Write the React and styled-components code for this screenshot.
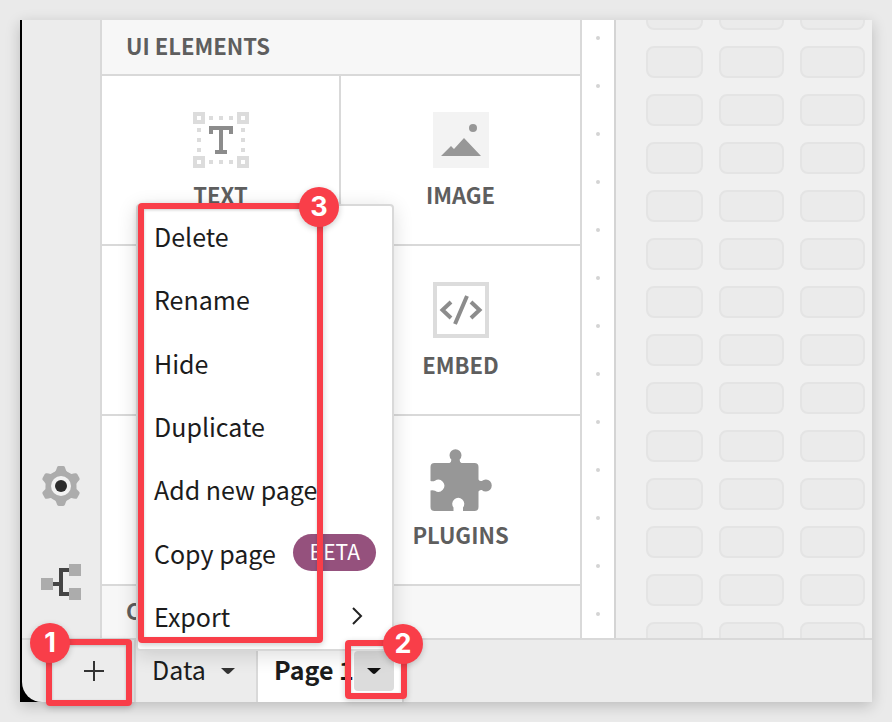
import React from "react";
import styled, { createGlobalStyle, css } from "styled-components";

const line = "#d9d9d9";
const red = "#f93e49";

const GlobalStyle = createGlobalStyle`
  *, *::before, *::after { box-sizing: border-box; }
  body {
    margin: 0;
    background: #eaeaea;
    color: #1c1c1c;
    font-family: "Noto Sans CJK SC", "Noto Sans", sans-serif;
  }
  button {
    margin: 0;
    padding: 0;
    border: 0;
    background: none;
    color: inherit;
    font: inherit;
    cursor: pointer;
  }
  svg { display: block; flex: none; }
`;

const Page = styled.div`
  display: flex;
  min-height: 100vh;
  padding: 20px;
`;

const Window = styled.div`
  position: relative;
  display: flex;
  flex: 1;
  flex-direction: column;
  min-width: 0;
  padding-left: 2px;
  background: #000;
  box-shadow: 0 4px 14px rgba(0, 0, 0, 0.2);
`;

const Workspace = styled.main`
  display: flex;
  flex: 1;
`;

const Rail = styled.nav`
  display: flex;
  flex: none;
  flex-direction: column;
  justify-content: flex-end;
  align-items: center;
  gap: 56px;
  width: 80px;
  padding-bottom: 36px;
  background: #ececec;
  border-right: 2px solid ${line};
`;

const RailButton = styled.button`
  display: grid;
  place-items: center;
  width: 40px;
  height: 40px;
`;

const Panel = styled.aside`
  display: flex;
  flex: none;
  flex-direction: column;
  width: 480px;
  background: #fff;
  border-right: 2px solid ${line};
`;

const PanelHeading = styled.h2`
  display: flex;
  align-items: center;
  flex: ${(p) => (p.$last ? "1" : "none")};
  min-height: ${(p) => (p.$last ? "52px" : "56px")};
  margin: 0;
  padding: 0 24px 4px;
  background: #f7f7f7;
  border-bottom: ${(p) => (p.$last ? "0" : `2px solid ${line}`)};
  color: #5e5e5e;
  font-size: 22px;
  font-weight: 700;
  line-height: 24px;
`;

const TileGrid = styled.div`
  display: grid;
  grid-template-columns: 1fr 1fr;
`;

const Tile = styled.button`
  display: flex;
  flex-direction: column;
  align-items: center;
  gap: 14px;
  height: 170px;
  padding-top: 36px;
  border-bottom: 2px solid ${line};
  color: #5e5e5e;
  font-size: 22px;
  font-weight: 700;
  line-height: 24px;

  &:nth-child(odd) { border-right: 2px solid ${line}; }
`;

const TileIcon = styled.span`
  display: flex;
  align-items: center;
  justify-content: center;
  width: 56px;
  height: 56px;
`;

const Gutter = styled.div`
  display: flex;
  flex: none;
  flex-direction: column;
  align-items: center;
  gap: 44px;
  width: 34px;
  padding-top: 16px;
  background: #fff;
  border-right: 2px solid #d4d4d4;
`;

const Dot = styled.span`
  width: 4px;
  height: 4px;
  border-radius: 50%;
  background: #d4d4d4;
`;

const Canvas = styled.section`
  flex: 1;
  min-width: 0;
  overflow: hidden;
  padding: 0 7px 0 30px;
  background: #f0f0f0;
`;

const CellGrid = styled.div`
  display: grid;
  grid-template-columns: 57px 1fr 1fr;
  grid-auto-rows: 32px;
  gap: 16px;
  margin: -22px 0 -16px;
`;

const Cell = styled.div`
  background: #ebebeb;
  border: 2px solid #e4e4e4;
  border-radius: 8px;
`;

const PageBar = styled.footer`
  display: flex;
  flex: none;
  height: 64px;
  padding-left: 32px;
  background: #ececec;
  border-top: 2px solid ${line};
  border-bottom-left-radius: 20px;
`;

const AddPage = styled.button`
  display: grid;
  place-items: center;
  width: 82px;
  border-right: 2px solid ${line};
`;

const Tab = styled.div`
  display: flex;
  align-items: center;
  padding: 0 8px 0 16px;
  border-right: 2px solid ${line};
  ${(p) =>
    p.$active
      ? css`
          width: 146px;
          background: #fff;
          font-weight: 700;
        `
      : css`
          width: 122px;
        `}
`;

const TabName = styled.button`
  flex: 1;
  min-width: 0;
  padding-bottom: 4px;
  font-size: 25px;
  line-height: 36px;
  text-align: left;
  white-space: nowrap;
`;

const TabCaret = styled.button`
  display: grid;
  flex: none;
  place-items: center;
  width: 40px;
  height: 40px;
  border-radius: 4px;
  background: ${(p) => (p.$open ? "#dcdcdc" : "none")};
`;

const Menu = styled.div`
  position: absolute;
  left: 116px;
  bottom: 51px;
  display: grid;
  grid-auto-rows: 1fr;
  width: 258px;
  height: 447px;
  background: #fff;
  border: 2px solid ${line};
  border-radius: 4px;
  box-shadow: 0 4px 20px rgba(0, 0, 0, 0.14);
`;

const MenuItem = styled.button`
  display: flex;
  align-items: center;
  justify-content: space-between;
  padding: 0 16px 3px;
  font-size: 25px;
  line-height: 36px;
  text-align: left;
  white-space: nowrap;
`;

const ChevronSlot = styled.span`
  padding-right: 13px;
`;

const Beta = styled.span`
  padding: 0 16px 2px;
  border-radius: 20px;
  background: #95517d;
  color: #fff;
  font-size: 21px;
  line-height: 35px;
`;

const Callout = styled.div`
  position: absolute;
  left: ${(p) => p.$left}px;
  bottom: ${(p) => p.$bottom}px;
  width: ${(p) => p.$width}px;
  height: ${(p) => p.$height}px;
  border: 6px solid ${red};
  border-radius: 4px;
  box-shadow: 0 2px 6px rgba(0, 0, 0, 0.2), inset 0 1px 3px rgba(0, 0, 0, 0.2);
  pointer-events: none;
`;

const Badge = styled.span`
  position: absolute;
  top: -22px;
  ${(p) => (p.$side === "left" ? "left: -22px;" : "right: -22px;")}
  width: 40px;
  height: 40px;
  border-radius: 50%;
  background: ${red};
  box-shadow: 0 2px 6px rgba(0, 0, 0, 0.2);
  color: #fff;
  font-family: Inter, "Liberation Sans", sans-serif;
  font-size: 27px;
  font-weight: 700;
  line-height: 40px;
  text-align: center;
`;

const GearIcon = () => (
  <svg width="40" height="40" viewBox="0 0 40 40" aria-hidden="true">
    <g fill="#acacac">
      <circle cx="20" cy="20" r="15.5" />
      {[0, 60, 120, 180, 240, 300].map((angle) => (
        <path
          key={angle}
          transform={`rotate(${angle} 20 20)`}
          d="M12.2 7.2Q15 5.8 15.5 3L16 1.4Q16.4 0 17.8 0H22.2Q23.6 0 24 1.4L24.5 3Q25 5.8 27.8 7.2L24 12H16Z"
        />
      ))}
    </g>
    <circle cx="20" cy="20" r="10" fill="#f2f2f2" />
    <circle cx="20" cy="20" r="6" fill="#2d2d2d" />
  </svg>
);

const TreeIcon = () => (
  <svg width="40" height="36" viewBox="0 0 40 36" aria-hidden="true">
    <path d="M12 20H20M28 6H20V30H28" fill="none" stroke="#444" strokeWidth="4" />
    <path d="M0 14H12V26H0ZM28 0H40V12H28ZM28 24H40V36H28Z" fill="#acacac" />
  </svg>
);

const TextIcon = () => (
  <svg width="56" height="56" viewBox="0 0 56 56" shapeRendering="crispEdges" aria-hidden="true">
    <path
      d="M2 2H10V10H2ZM46 2H54V10H46ZM2 46H10V54H2ZM46 46H54V54H46Z"
      fill="none"
      stroke="#dcdcdc"
      strokeWidth="4"
    />
    <path
      d="M16 6H40M16 50H40M6 16V40M50 16V40"
      fill="none"
      stroke="#dcdcdc"
      strokeWidth="4"
      strokeDasharray="4 6"
    />
    <path d="M16 14H40V22H36V18H30V38H34V42H22V38H26V18H20V22H16Z" fill="#8c8c8c" />
  </svg>
);

const ImageIcon = () => (
  <svg width="56" height="56" viewBox="0 0 56 56" aria-hidden="true">
    <path d="M0 0H56V56H0Z" fill="#f3f3f3" />
    <circle cx="40" cy="16" r="4" fill="#979797" />
    <path d="M8 44L18 34L21 37L31 26L48 44Z" fill="#979797" />
  </svg>
);

const EmbedIcon = () => (
  <svg width="56" height="56" viewBox="0 0 56 56" fill="none" aria-hidden="true">
    <path d="M2 2H54V54H2Z" stroke="#dcdcdc" strokeWidth="4" />
    <path d="M18 20L9.5 28L18 36M38 20L46.500 28L38 36M34 14L22 42" stroke="#8c8c8c" strokeWidth="4" />
  </svg>
);

const PluginIcon = () => (
  <svg width="64" height="64" viewBox="0 0 64 64" aria-hidden="true">
    <path
      fill="#979797"
      d="M5.500 15H20.500Q22.500 14.500 22.300 11.500A6 6 0 1 1 30.700 11.500Q30.500 14.500 32.500 15H45.500Q49.500 15 49.500 19V31.500Q50.500 33.500 52.800 33A6 6 0 1 1 52.800 42Q50.500 41.500 49.500 43.500V59Q49.500 63 45.500 63H34V59.500A6 6 0 1 0 24.500 59.500V63H5.500Q1.500 63 1.500 59V42.500Q4 42 6 42.800A6 6 0 1 0 6 32.700Q4 33.800 1.500 33V19Q1.500 15 5.500 15Z"
    />
  </svg>
);

const PlusIcon = () => (
  <svg width="20" height="20" viewBox="0 0 20 20" aria-hidden="true">
    <path d="M10 0V20M0 10H20" stroke="#333" strokeWidth="2" />
  </svg>
);

const CaretIcon = ({ color = "#333" }) => (
  <svg width="14" height="8" viewBox="0 0 14 8" aria-hidden="true">
    <path d="M0 1H14L8.500 6.300Q7 7.600 5.500 6.300Z" fill={color} />
  </svg>
);

const ChevronIcon = () => (
  <svg width="11" height="18" viewBox="0 0 11 18" fill="none" aria-hidden="true">
    <path d="M1 1L9 9L1 17" stroke="#222" strokeWidth="2" />
  </svg>
);

const tiles = [
  { label: "TEXT", Icon: TextIcon },
  { label: "IMAGE", Icon: ImageIcon },
  {},
  { label: "EMBED", Icon: EmbedIcon },
  {},
  { label: "PLUGINS", Icon: PluginIcon },
];

const menuItems = [
  { label: "Delete" },
  { label: "Rename" },
  { label: "Hide" },
  { label: "Duplicate" },
  { label: "Add new page" },
  { label: "Copy page", beta: true },
  { label: "Export", submenu: true },
];

const callouts = [
  { number: 1, side: "left", left: 26, bottom: -4, width: 86, height: 67 },
  { number: 2, side: "right", left: 325, bottom: 3, width: 62, height: 59 },
  { number: 3, side: "right", left: 118, bottom: 59, width: 185, height: 440 },
];

export default function App() {
  return (
    <>
      <GlobalStyle />
      <Page>
        <Window>
          <Workspace>
            <Rail>
              <RailButton aria-label="Settings">
                <GearIcon />
              </RailButton>
              <RailButton aria-label="Lineage">
                <TreeIcon />
              </RailButton>
            </Rail>
            <Panel>
              <PanelHeading>UI ELEMENTS</PanelHeading>
              <TileGrid>
                {tiles.map(({ label, Icon }, i) => (
                  <Tile key={i}>
                    {Icon && (
                      <TileIcon>
                        <Icon />
                      </TileIcon>
                    )}
                    {label}
                  </Tile>
                ))}
              </TileGrid>
              <PanelHeading $last>CONTROLS</PanelHeading>
            </Panel>
            <Gutter>
              {Array.from({ length: 13 }, (_, i) => (
                <Dot key={i} />
              ))}
            </Gutter>
            <Canvas>
              <CellGrid>
                {Array.from({ length: 42 }, (_, i) => (
                  <Cell key={i} />
                ))}
              </CellGrid>
            </Canvas>
          </Workspace>

          <PageBar>
            <AddPage aria-label="Add page">
              <PlusIcon />
            </AddPage>
            <Tab>
              <TabName>Data</TabName>
              <TabCaret aria-label="Data options">
                <CaretIcon />
              </TabCaret>
            </Tab>
            <Tab $active>
              <TabName>Page 1</TabName>
              <TabCaret $open aria-label="Page 1 options">
                <CaretIcon color="#111" />
              </TabCaret>
            </Tab>
          </PageBar>

          <Menu role="menu">
            {menuItems.map(({ label, beta, submenu }) => (
              <MenuItem key={label} role="menuitem">
                {label}
                {beta && <Beta>BETA</Beta>}
                {submenu && (
                  <ChevronSlot>
                    <ChevronIcon />
                  </ChevronSlot>
                )}
              </MenuItem>
            ))}
          </Menu>

          {callouts.map((c) => (
            <Callout key={c.number} $left={c.left} $bottom={c.bottom} $width={c.width} $height={c.height}>
              <Badge $side={c.side}>{c.number}</Badge>
            </Callout>
          ))}
        </Window>
      </Page>
    </>
  );
}
